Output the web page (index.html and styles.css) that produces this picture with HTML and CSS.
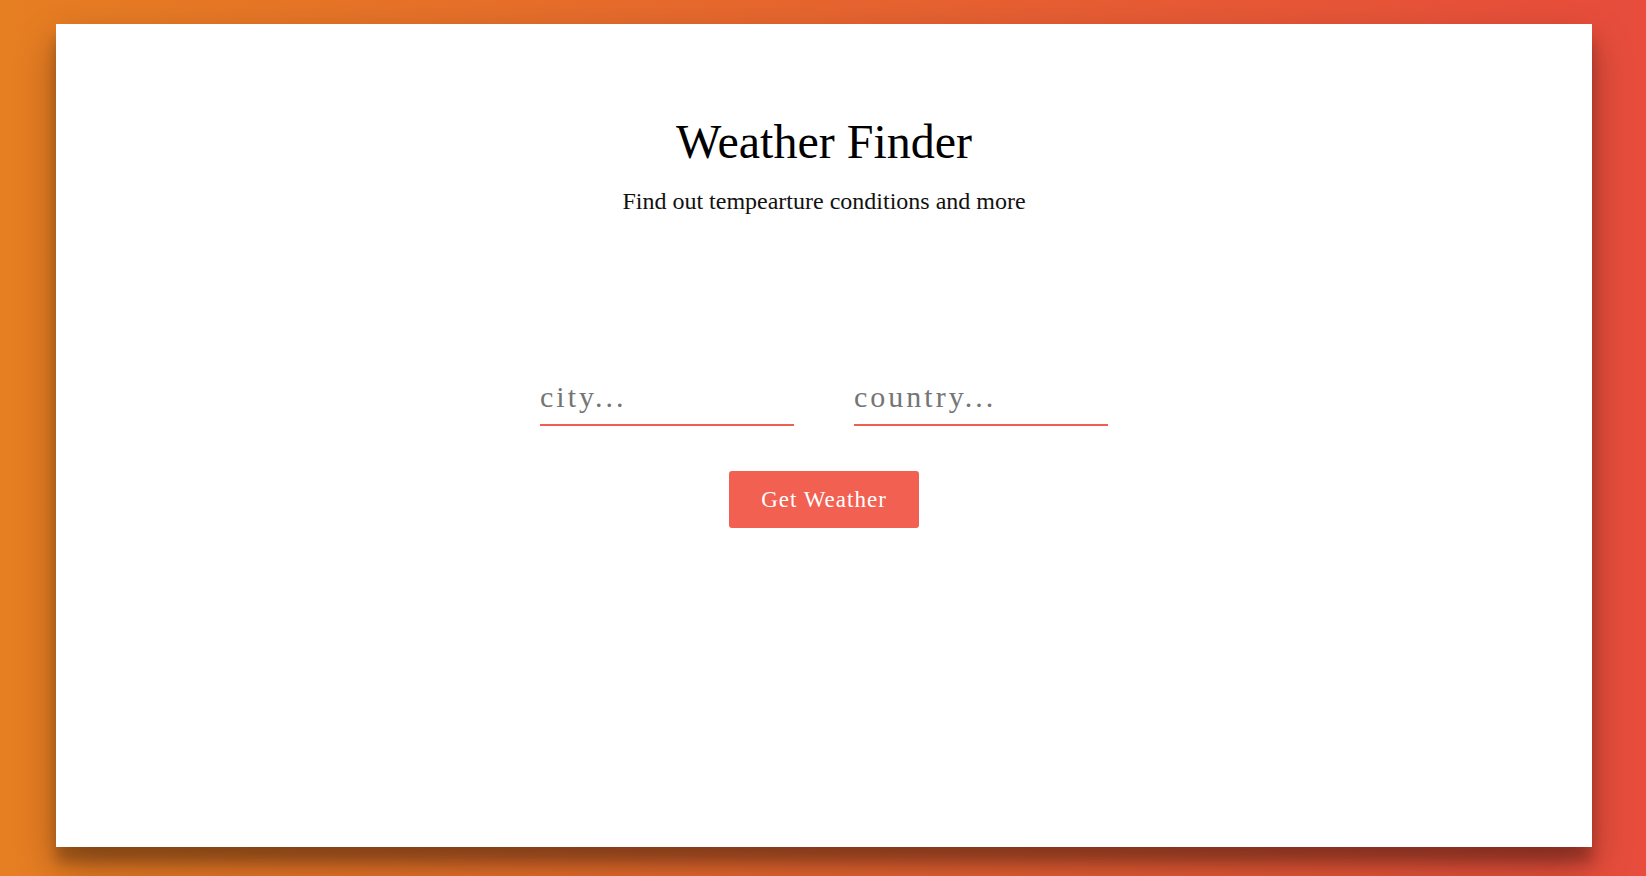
FILE: index.html
```html
<!DOCTYPE html>
<html lang="en">
<head>
<meta charset="utf-8">
<title>Weather Finder</title>
<link rel="stylesheet" href="styles.css">
</head>
<body>
  <main class="card">
    <header class="titles">
      <h1 class="title">Weather Finder</h1>
      <p class="subtitle">Find out tempearture conditions and more</p>
    </header>
    <form class="form">
      <div class="fields">
        <input class="field" type="text" name="city" placeholder="city...">
        <input class="field" type="text" name="country" placeholder="country...">
      </div>
      <button class="btn" type="button">Get Weather</button>
    </form>
  </main>
</body>
</html>
```

FILE: styles.css
```css
html, body {
  margin: 0;
  padding: 0;
  height: 100%;
}

body {
  background: linear-gradient(to right, #e67e22, #e74c3c);
  font-family: "Liberation Serif", "Times New Roman", serif;
  display: flex;
  justify-content: center;
  align-items: flex-start;
  padding-top: 24px;
  padding-left: 2px;
  box-sizing: border-box;
  overflow: hidden;
}

.card {
  width: 1536px;
  height: 823px;
  background: #fff;
  box-shadow: 0 19px 38px rgba(0, 0, 0, 0.30), 0 15px 12px rgba(0, 0, 0, 0.22);
  display: flex;
  flex-direction: column;
  align-items: center;
  padding-top: 94px;
  box-sizing: border-box;
}

.titles {
  display: flex;
  flex-direction: column;
  align-items: center;
}

.title {
  margin: 0;
  font-size: 48px;
  font-weight: normal;
  line-height: 1;
  color: #000;
}

.subtitle {
  margin: 23px 0 0;
  font-size: 24px;
  line-height: 1;
  color: #111;
}

.form {
  margin-top: 166px;
  display: flex;
  flex-direction: column;
  align-items: center;
}

.fields {
  display: flex;
  gap: 60px;
}

.field {
  width: 254px;
  box-sizing: border-box;
  border: none;
  border-bottom: 2px solid #ef5f50;
  background: transparent;
  outline: none;
  padding: 0 0 9px;
  margin: 0;
  font-family: "Liberation Serif", "Times New Roman", serif;
  font-size: 30px;
  line-height: 36px;
  height: 47px;
  letter-spacing: 3px;
  color: #333;
}

.field::placeholder {
  color: #757575;
}

.btn {
  margin-top: 45px;
  border: none;
  border-radius: 3px;
  background: #f16051;
  color: #fff;
  font-family: "Liberation Serif", "Times New Roman", serif;
  font-size: 23px;
  line-height: 23px;
  letter-spacing: 1px;
  padding: 17px 32px;
  cursor: pointer;
}
```
